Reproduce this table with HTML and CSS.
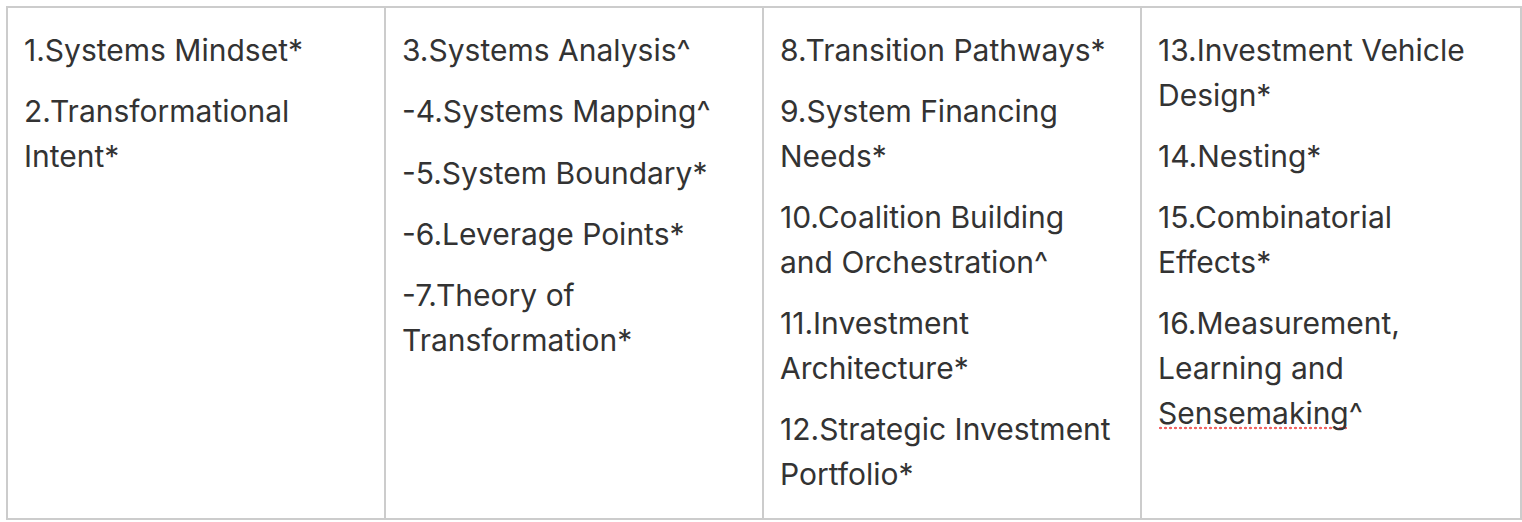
FILE: index.html
```html
<!DOCTYPE html>
<html lang="en">
<head>
<meta charset="utf-8">
<title>Framework table</title>
<link rel="stylesheet" href="styles.css">
</head>
<body>
<div class="page">
  <div class="table">
    <div class="cell">
      <p>1.Systems Mindset*</p>
      <p>2.Transformational Intent*</p>
    </div>
    <div class="cell">
      <p>3.Systems Analysis^</p>
      <p>-4.Systems Mapping^</p>
      <p>-5.System Boundary*</p>
      <p>-6.Leverage Points*</p>
      <p>-7.Theory of Transformation*</p>
    </div>
    <div class="cell">
      <p>8.Transition Pathways*</p>
      <p>9.System Financing Needs*</p>
      <p>10.Coalition Building and Orchestration^</p>
      <p>11.Investment Architecture*</p>
      <p>12.Strategic Investment Portfolio*</p>
    </div>
    <div class="cell">
      <p>13.Investment Vehicle Design*</p>
      <p>14.Nesting*</p>
      <p>15.Combinatorial Effects*</p>
      <p>16.Measurement, Learning and <span class="spell">Sensemaking</span>^</p>
    </div>
  </div>
</div>
</body>
</html>
```

FILE: styles.css
```css
html, body {
  margin: 0;
  padding: 0;
  background: #ffffff;
}

.page {
  padding: 6px 0 0 6px;
}

.table {
  display: grid;
  grid-template-columns: 378px 378px 378px 380px;
  width: 1516px;
  height: 514px;
  box-sizing: border-box;
  border-left: 2px solid #cccccc;
  border-top: 2px solid #cccccc;
  font-family: "Inter", "Liberation Sans", sans-serif;
  font-size: 30px;
  line-height: 44.75px;
  color: #333333;
}

.cell {
  box-sizing: border-box;
  border-right: 2px solid #cccccc;
  border-bottom: 2px solid #cccccc;
  padding: 20px 20px 0 16px;
}

.cell p {
  margin: 0 0 16.5px 0;
}

.spell {
  background-image: radial-gradient(circle, #f26464 1.1px, rgba(242, 100, 100, 0) 1.6px);
  background-size: 5px 4px;
  background-repeat: repeat-x;
  background-position: 0 calc(100% - 1px);
}
```
